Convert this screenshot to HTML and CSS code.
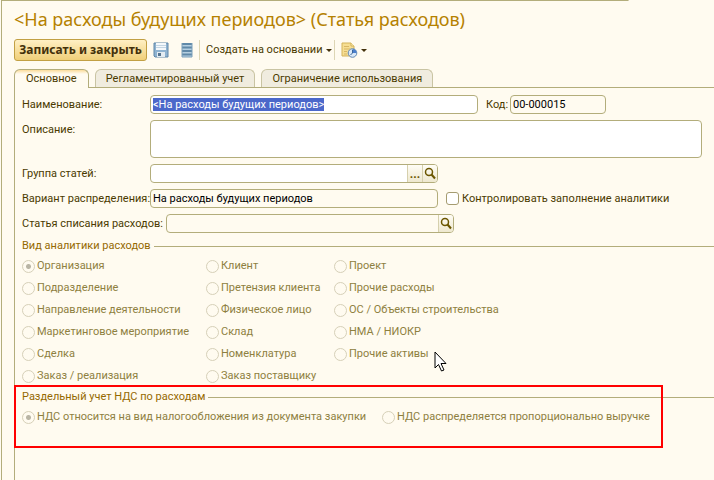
FILE: index.html
```html
<!DOCTYPE html>
<html lang="ru">
<head>
  <meta charset="UTF-8" />
  <title>Статья расходов</title>
  <meta name="viewport" content="width=device-width, initial-scale=1.0" />
  <link rel="stylesheet" href="styles.css">
</head>
<body>

  <div class="window">
    <h1>&lt;На расходы будущих периодов&gt; (Статья расходов)</h1>

    <div class="toolbar">
      <button type="button" class="btn-main">Записать и закрыть</button>
      <button type="button" class="btn-icon" aria-label="Записать">
        <svg width="16" height="16" viewBox="0 0 16 16">
          <path d="M1 1h14v14H2l-1-1z" fill="#8fb3d1" stroke="#5f86a8"/>
          <rect x="3" y="1" width="10" height="7" fill="#f4f8fb"/>
          <path d="M3 3.500h10M3 5.500h10" stroke="#c3d5e3"/>
          <rect x="4" y="10" width="8" height="5" fill="#e3ebf1"/>
          <rect x="5" y="11" width="3" height="3" fill="#55738e"/>
        </svg>
      </button>
      <button type="button" class="btn-icon" aria-label="Список">
        <svg width="12" height="16" viewBox="0 0 12 16">
          <rect x="1" y="1" width="10" height="14" fill="#b5cfe1"/>
          <path d="M1 2h10M1 5.500h10M1 9h10M1 12.500h10" stroke="#6089a8" stroke-width="2"/>
          <path d="M1 1v14M11 1v14M1 15h10" stroke="#7b9fba"/>
        </svg>
      </button>
      <span class="separator"></span>
      <button type="button" class="btn-menu">Создать на основании <span class="arrow"></span></button>
      <span class="separator"></span>
      <button type="button" class="btn-menu" aria-label="Отчеты">
        <svg width="17" height="16" viewBox="0 0 17 16">
          <path d="M1 1h9l3 3v10H1z" fill="#f6de93" stroke="#d3b35b"/>
          <path d="M10 1v3h3" fill="#fff2bd" stroke="#d3b35b"/>
          <path d="M3 4.500h5M3 7h6M3 9.500h3M3 12h3" stroke="#d8b765"/>
          <circle cx="11.500" cy="11" r="4.300" fill="#d9e8f7" stroke="#6288b3"/>
          <path d="M11.500 11V7a4 4 0 0 1 4 4z" fill="#4a7ecb"/>
          <path d="M11.500 8v3l-2 2" stroke="#3a659a" fill="none"/>
        </svg>
        <span class="arrow"></span>
      </button>
    </div>

    <div class="tabs">
      <button type="button" class="tab active">Основное</button>
      <button type="button" class="tab">Регламентированный учет</button>
      <button type="button" class="tab">Ограничение использования</button>
    </div>

    <form class="panel">
      <div class="row">
        <label class="caption" for="name">Наименование:</label>
        <input type="text" class="field field-name" id="name" value="&lt;На расходы будущих периодов&gt;" />
        <label class="caption-code" for="code">Код:</label>
        <input type="text" class="field field-code readonly" id="code" value="00-000015" readonly />
      </div>

      <div class="row row-top">
        <label class="caption" for="description">Описание:</label>
        <textarea class="field description" id="description"></textarea>
      </div>

      <div class="row">
        <label class="caption" for="group">Группа статей:</label>
        <div class="field combo">
          <input type="text" id="group" />
          <button type="button" aria-label="Выбрать"><span class="dots">...</span></button>
          <button type="button" aria-label="Открыть">
            <svg width="12" height="13" viewBox="0 0 12 13">
              <circle cx="5" cy="5" r="3.500" fill="none" stroke="#6b5600" stroke-width="1.500"/>
              <path d="M7.500 7.500l3.500 4" stroke="#6b5600" stroke-width="2"/>
            </svg>
          </button>
        </div>
      </div>

      <div class="row">
        <label class="caption" for="variant">Вариант распределения:</label>
        <input type="text" class="field field-variant readonly" id="variant" value="На расходы будущих периодов" readonly />
        <label class="check"><input type="checkbox" />Контролировать заполнение аналитики</label>
      </div>

      <div class="row">
        <label class="caption caption-wide" for="article">Статья списания расходов:</label>
        <div class="field combo readonly">
          <input type="text" id="article" readonly />
          <button type="button" aria-label="Открыть">
            <svg width="12" height="13" viewBox="0 0 12 13">
              <circle cx="5" cy="5" r="3.500" fill="none" stroke="#6b5600" stroke-width="1.500"/>
              <path d="M7.500 7.500l3.500 4" stroke="#6b5600" stroke-width="2"/>
            </svg>
          </button>
        </div>
      </div>

      <section class="kinds">
        <h2>Вид аналитики расходов</h2>
        <div class="radio-columns">
          <div class="radio-column first">
            <label class="radio"><input type="radio" name="kind" checked disabled />Организация</label>
            <label class="radio"><input type="radio" name="kind" disabled />Подразделение</label>
            <label class="radio"><input type="radio" name="kind" disabled />Направление деятельности</label>
            <label class="radio"><input type="radio" name="kind" disabled />Маркетинговое мероприятие</label>
            <label class="radio"><input type="radio" name="kind" disabled />Сделка</label>
            <label class="radio"><input type="radio" name="kind" disabled />Заказ / реализация</label>
          </div>
          <div class="radio-column second">
            <label class="radio"><input type="radio" name="kind" disabled />Клиент</label>
            <label class="radio"><input type="radio" name="kind" disabled />Претензия клиента</label>
            <label class="radio"><input type="radio" name="kind" disabled />Физическое лицо</label>
            <label class="radio"><input type="radio" name="kind" disabled />Склад</label>
            <label class="radio"><input type="radio" name="kind" disabled />Номенклатура</label>
            <label class="radio"><input type="radio" name="kind" disabled />Заказ поставщику</label>
          </div>
          <div class="radio-column">
            <label class="radio"><input type="radio" name="kind" disabled />Проект</label>
            <label class="radio"><input type="radio" name="kind" disabled />Прочие расходы</label>
            <label class="radio"><input type="radio" name="kind" disabled />ОС / Объекты строительства</label>
            <label class="radio"><input type="radio" name="kind" disabled />НМА / НИОКР</label>
            <label class="radio"><input type="radio" name="kind" disabled />Прочие активы</label>
          </div>
        </div>
      </section>

      <section class="vat">
        <h2>Раздельный учет НДС по расходам</h2>
        <div class="radio-columns">
          <div class="radio-column vat-first">
            <label class="radio"><input type="radio" name="vat" checked disabled />НДС относится на вид налогообложения из документа закупки</label>
          </div>
          <div class="radio-column">
            <label class="radio"><input type="radio" name="vat" disabled />НДС распределяется пропорционально выручке</label>
          </div>
        </div>
        <div class="highlight"></div>
      </section>
    </form>
  </div>

  <svg class="cursor" width="13" height="21" viewBox="0 0 13 21">
    <path d="M1 1v16l3.500-3.500 3 6.500 2.500-1-3-6.500h5z" fill="#fff" stroke="#000"/>
  </svg>

  <script>
    document.getElementById("name").focus();
    document.getElementById("name").select();
  </script>
</body>
</html>
```

FILE: styles.css
```css
* { margin: 0; padding: 0; box-sizing: border-box; }
body {
  font-family: Roboto, "Liberation Sans", sans-serif;
  font-size: 11px;
  line-height: 16px;
  color: #4a3a00;
  background: #fffbf0;
}
button, input, textarea {
  font: inherit;
  color: inherit;
}
button {
  border: none;
  background: none;
  cursor: pointer;
}
svg { display: block; }

.window {
  display: flex;
  flex-direction: column;
  min-height: 100vh;
  margin-left: 1px;
  border-left: 1px solid #b3ad7b;
  padding-left: 12px;
  background: linear-gradient(#b3ad7b, #b3ad7b) 0 0 / 88% 1px no-repeat;
}
h1 {
  font-family: "Noto Sans", sans-serif;
  font-size: 18px;
  font-weight: normal;
  line-height: 24px;
  padding-top: 7px;
  color: #b58100;
  white-space: nowrap;
}

/* Toolbar */
.toolbar {
  display: flex;
  align-items: center;
  height: 22px;
  margin-top: 8px;
}
.btn-main {
  height: 22px;
  width: 133px;
  border: 1px solid #c2a044;
  border-radius: 3px;
  background: linear-gradient(#fff0c4, #f0cf79);
  font-family: "Noto Sans", sans-serif;
  font-size: 12px;
  font-weight: bold;
  color: #43300a;
  white-space: nowrap;
}
.btn-icon {
  margin-left: 4px;
  width: 20px;
  display: flex;
  justify-content: center;
}
.btn-main + .btn-icon { margin-right: 2px; }
.separator {
  width: 1px;
  height: 20px;
  margin: 0 6px 0 2px;
  background: #ddd6b5;
}
.btn-menu {
  display: flex;
  align-items: center;
  gap: 3px;
  white-space: nowrap;
}
.arrow {
  border: 3px solid transparent;
  border-top-color: #43300a;
  border-bottom: none;
}

/* Tabs */
.tabs {
  display: flex;
  align-items: flex-end;
  gap: 6px;
  margin-top: 8px;
  border-bottom: 1px solid #b3ad7b;
}
.tab {
  height: 18px;
  padding: 0 10px;
  border: 1px solid #c9c4a3;
  border-bottom: none;
  border-radius: 6px 6px 0 0;
  background: #f0ecdf;
  white-space: nowrap;
}
.tab.active {
  height: 19px;
  padding: 0 11px;
  margin-bottom: -1px;
  border-color: #b3ad7b;
  background: linear-gradient(#fbdc9b, #fffbf0 4px);
}

.panel {
  flex: 1;
  display: flex;
  flex-direction: column;
  gap: 6px;
  padding: 7px 0 0 7px;
  border-left: 1px solid #b3ad7b;
}
.row {
  display: flex;
  align-items: center;
  white-space: nowrap;
}
.row-top { align-items: flex-start; }
.row-top .caption { padding-top: 2px; }
.caption {
  flex: none;
  width: 128px;
}
.caption-wide { width: 144px; }
.caption-code {
  width: 24px;
  margin-left: 8px;
}
.field {
  height: 19px;
  padding: 0 2px;
  border: 1px solid #b3ad7b;
  border-radius: 4px;
  background: #fff;
  color: #000;
  outline: none;
}
.field-name { width: 328px; }
.field-name::selection {
  background: #4b68ca;
  color: #fff;
}
.field-code { width: 96px; }
.field-variant { width: 288px; }
.readonly { background: #fffbf0; }
.description {
  flex: 1;
  height: 38px;
  margin-right: 12px;
  resize: none;
}
.combo {
  display: flex;
  width: 288px;
  padding: 0;
  overflow: hidden;
}
.combo input {
  flex: 1;
  min-width: 0;
  border: none;
  outline: none;
  background: none;
}
.combo button {
  display: flex;
  align-items: center;
  justify-content: center;
  width: 15px;
  border-left: 1px solid #d6d0ad;
  background: linear-gradient(#fffdf5, #eee8cf);
  color: #6b5600;
}
.dots {
  font-size: 12px;
  font-weight: bold;
}

.check {
  display: flex;
  align-items: center;
  gap: 3px;
  margin-left: 8px;
}
.check input {
  width: 13px;
  height: 13px;
  appearance: none;
  border: 1px solid #a59c70;
  border-radius: 3px;
  background: #fff;
}

/* Groups */
h2 {
  display: flex;
  align-items: center;
  gap: 3px;
  font-size: 11px;
  font-weight: normal;
  color: #956900;
  white-space: nowrap;
}
h2::after {
  content: "";
  flex: 1;
  height: 1px;
  background: #b3ad7b;
}
.kinds { margin-top: -1px; }
.radio-columns {
  display: flex;
  padding-top: 1px;
}
.radio-column.first { width: 184px; }
.radio-column.second { width: 128px; }
.radio-column.vat-first { width: 360px; }
.radio {
  display: flex;
  align-items: center;
  gap: 2px;
  height: 22px;
  color: #8e8040;
  white-space: nowrap;
}
.radio input {
  flex: none;
  width: 13px;
  height: 13px;
  appearance: none;
  border: 1px solid #d6d0b8;
  border-radius: 50%;
}
.radio input:checked {
  background: radial-gradient(circle, #b9b5a5 2px, transparent 3px);
}
.vat {
  position: relative;
  margin-top: -4px;
}
.highlight {
  position: absolute;
  top: -4px;
  left: -8px;
  right: 51px;
  height: 63px;
  border: 2px solid #f00;
  pointer-events: none;
}
.cursor {
  position: absolute;
  left: 434px;
  top: 351px;
}
```
